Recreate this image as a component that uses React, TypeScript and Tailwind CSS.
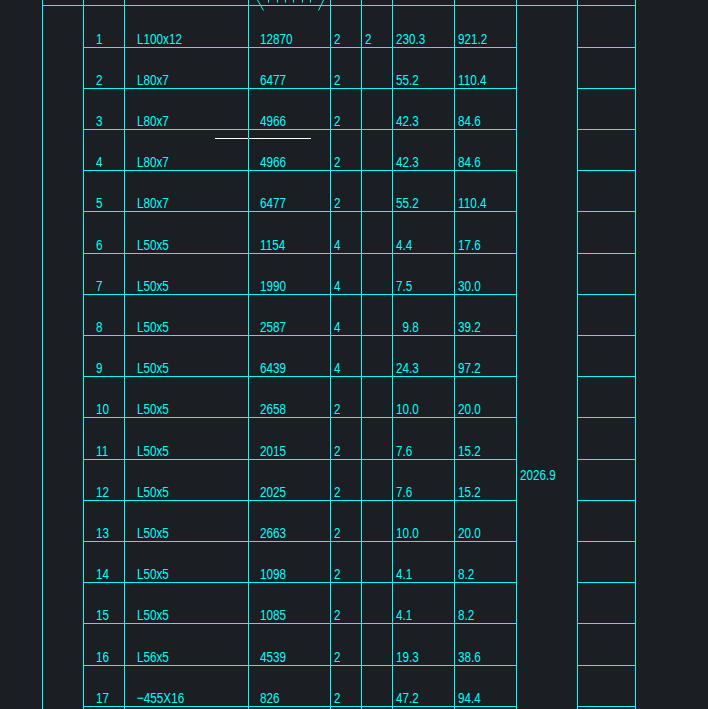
import React from 'react';

type Part = {
  no: string;
  spec: string;
  length: string;
  qty: string;
  qty2?: string;
  unit: string;
  total: string;
  h: string;
};

// 17 rows, heights follow the drawing's line spacing (1px bottom rule included)
const PARTS: Part[] = [
  { no: '1', spec: 'L100x12', length: '12870', qty: '2', qty2: '2', unit: '230.3', total: '921.2', h: 'h-[42px]' },
  { no: '2', spec: 'L80x7', length: '6477', qty: '2', unit: '55.2', total: '110.4', h: 'h-[41px]' },
  { no: '3', spec: 'L80x7', length: '4966', qty: '2', unit: '42.3', total: '84.6', h: 'h-[41px]' },
  { no: '4', spec: 'L80x7', length: '4966', qty: '2', unit: '42.3', total: '84.6', h: 'h-[41px]' },
  { no: '5', spec: 'L80x7', length: '6477', qty: '2', unit: '55.2', total: '110.4', h: 'h-[41px]' },
  { no: '6', spec: 'L50x5', length: '1154', qty: '4', unit: '4.4', total: '17.6', h: 'h-[42px]' },
  { no: '7', spec: 'L50x5', length: '1990', qty: '4', unit: '7.5', total: '30.0', h: 'h-[41px]' },
  { no: '8', spec: 'L50x5', length: '2587', qty: '4', unit: '  9.8', total: '39.2', h: 'h-[41px]' },
  { no: '9', spec: 'L50x5', length: '6439', qty: '4', unit: '24.3', total: '97.2', h: 'h-[41px]' },
  { no: '10', spec: 'L50x5', length: '2658', qty: '2', unit: '10.0', total: '20.0', h: 'h-[41px]' },
  { no: '11', spec: 'L50x5', length: '2015', qty: '2', unit: '7.6', total: '15.2', h: 'h-[42px]' },
  { no: '12', spec: 'L50x5', length: '2025', qty: '2', unit: '7.6', total: '15.2', h: 'h-[41px]' },
  { no: '13', spec: 'L50x5', length: '2663', qty: '2', unit: '10.0', total: '20.0', h: 'h-[41px]' },
  { no: '14', spec: 'L50x5', length: '1098', qty: '2', unit: '4.1', total: '8.2', h: 'h-[41px]' },
  { no: '15', spec: 'L50x5', length: '1085', qty: '2', unit: '4.1', total: '8.2', h: 'h-[41px]' },
  { no: '16', spec: 'L56x5', length: '4539', qty: '2', unit: '19.3', total: '38.6', h: 'h-[42px]' },
  { no: '17', spec: '−455X16', length: '826', qty: '2', unit: '47.2', total: '94.4', h: 'h-[41px]' },
];

const GRID =
  'grid grid-cols-[41px_41px_124px_82px_31px_31px_62px_62px_61px_59px]';
const LINE = 'border-[#00ffff]';

function Txt({ children }: { children: React.ReactNode }) {
  return (
    <span className="inline-block origin-bottom-left scale-x-[0.78] whitespace-pre font-['Liberation_Sans',sans-serif] text-[15px] leading-none text-[#00ffff]">
      {children}
    </span>
  );
}

function Cell({ children, pad }: { children?: React.ReactNode; pad: string }) {
  return (
    <div className={`flex items-end border-b border-l pb-[1px] ${LINE} ${pad}`}>
      {children != null && <Txt>{children}</Txt>}
    </div>
  );
}

export default function App() {
  return (
    <div className="relative h-[709px] w-full overflow-hidden bg-[#1b1e23]">
      <div className="ml-[42px] w-[594px]">
        {/* header stub, only its bottom rule is in view */}
        <div className={`${GRID} h-[6px]`}>
          {Array.from({ length: 10 }).map((_, i) => (
            <div
              key={i}
              className={`border-b border-l ${LINE} ${i === 9 ? 'border-r' : ''}`}
            />
          ))}
        </div>

        {PARTS.map((p) => (
          <div key={p.no} className={`${GRID} ${p.h}`}>
            <div className={`border-l ${LINE}`} />
            <Cell pad="pl-[12px]">{p.no}</Cell>
            <Cell pad="pl-[12px]">{p.spec}</Cell>
            <Cell pad="pl-[11px]">{p.length}</Cell>
            <Cell pad="pl-[3px]">{p.qty}</Cell>
            <Cell pad="pl-[3px]">{p.qty2}</Cell>
            <Cell pad="pl-[3px]">{p.unit}</Cell>
            <Cell pad="pl-[3px]">{p.total}</Cell>
            <div className={`border-l ${LINE} pl-[3px] pt-[2px]`}>
              {p.no === '12' && <Txt>2026.9</Txt>}
            </div>
            <div className={`border-b border-l border-r ${LINE}`} />
          </div>
        ))}

        <div className={`${GRID} h-[10px]`}>
          {Array.from({ length: 10 }).map((_, i) => (
            <div
              key={i}
              className={`border-l ${LINE} ${i === 9 ? 'border-r' : ''}`}
            />
          ))}
        </div>
      </div>

      {/* tail of the header caption's bracket, cut off by the view */}
      <svg
        className="absolute left-[250px] top-0"
        width="80"
        height="12"
        viewBox="0 0 80 12"
        stroke="#00ffff"
        strokeWidth="1"
        fill="none"
      >
        <path d="M7.5 0 L13.5 10.5" />
        <path d="M73.5 0 L68.5 10.5" />
        <path d="M18.5 0 V2.5 M27.5 0 V2.5 M35.5 0 V2.5 M43.5 0 V2.5 M52.5 0 V2.5 M60.5 0 V2.5" />
      </svg>

      {/* stray white line crossing the table */}
      <div className="absolute left-[215px] top-[138px] flex h-px w-[96px] bg-white">
        <span className="ml-[33px] h-px w-px bg-[#ff3030]" />
      </div>
    </div>
  );
}
